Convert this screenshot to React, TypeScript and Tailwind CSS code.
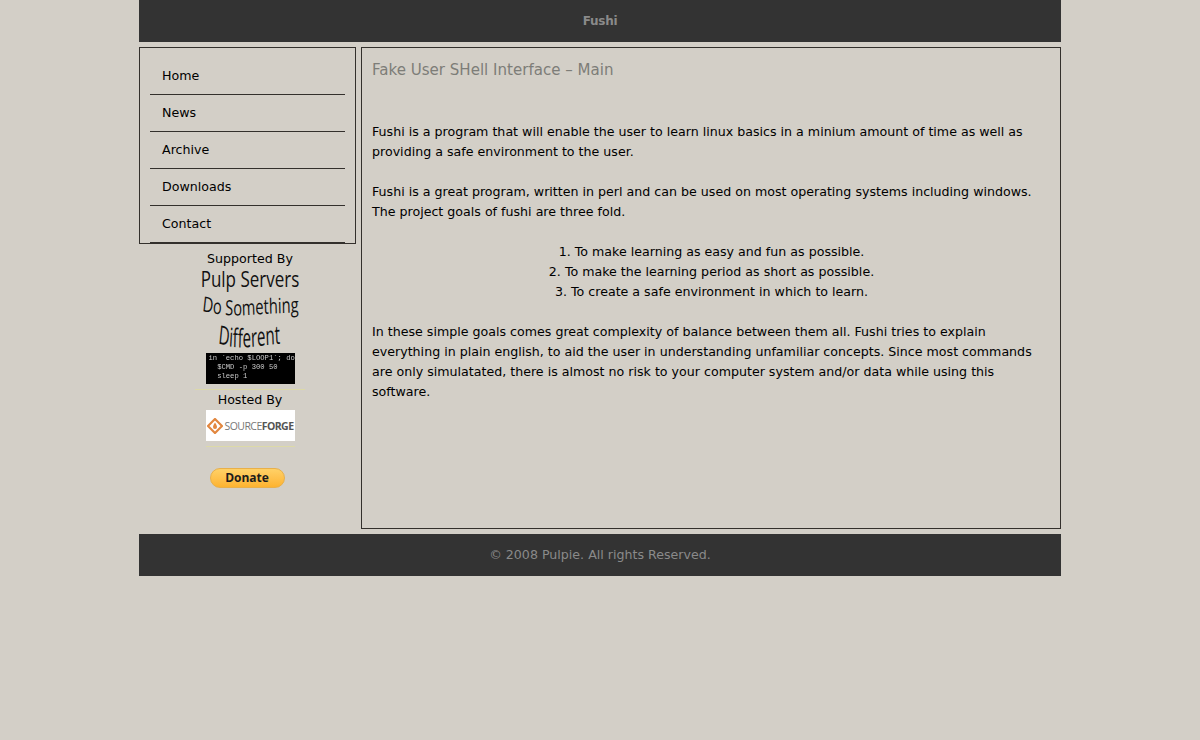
const NAV_ITEMS = ["Home", "News", "Archive", "Downloads", "Contact"];

function PulpServersLogo() {
  return (
    <svg width="110" height="84" viewBox="0 0 110 84" className="block overflow-visible">
      <defs>
        <path id="line-do" d="M 7 42 Q 40 48 75 46 T 160 43" />
        <path id="line-diff" d="M 23 74 Q 50 80 80 78 T 140 74" />
      </defs>
      <text x="55" y="18" textAnchor="middle" fontFamily="'Open Sans', sans-serif" fontSize="21" fill="#111" transform="translate(55 0) scale(0.81 1) translate(-55 0)">
        Pulp Servers
      </text>
      <text fontFamily="'Open Sans', sans-serif" fontSize="21" fill="#111" transform="translate(7 0) scale(0.7 1) translate(-7 0)">
        <textPath href="#line-do">Do Something</textPath>
      </text>
      <text fontFamily="'Open Sans', sans-serif" fontSize="26" fill="#111" transform="translate(23 0) scale(0.58 1) translate(-23 0)">
        <textPath href="#line-diff">Different</textPath>
      </text>
    </svg>
  );
}

function TerminalShot() {
  return (
    <div className="w-[89px] h-[31px] bg-black overflow-hidden font-['Liberation_Mono',monospace] text-[7.2px] leading-[9px] text-[#c9c9c9] whitespace-pre pt-[1px] pl-[3px] [filter:blur(0.3px)]">
      <div>{"in `echo $LOOP1`; do"}</div>
      <div>{"  $CMD -p 300 50"}</div>
      <div>{"  sleep 1"}</div>
    </div>
  );
}

function SourceForgeLogo() {
  return (
    <div className="w-[89px] h-[31px] bg-white flex items-center pl-[1px]">
      <svg width="16" height="16" viewBox="0 0 16 16" className="shrink-0">
        <path d="M8 1 L15 8 L8 15 L1 8 Z" fill="none" stroke="#e2873f" strokeWidth="2.2" />
        <path d="M8 4.5 C9.5 7 10 8 10 9 A2 2 0 0 1 6 9 C6 8 6.5 7 8 4.5 Z" fill="#e2873f" />
      </svg>
      <span className="ml-[2px] text-[10.5px] tracking-[-0.55px] font-['Open_Sans',sans-serif] text-[#777] whitespace-nowrap">
        SOURCE<span className="font-bold text-[#555]">FORGE</span>
      </span>
    </div>
  );
}

export default function App() {
  return (
    <div className="min-h-[740px] bg-[#d3cfc7] font-['DejaVu_Sans',sans-serif] text-[12.64px] leading-[20px] text-black">
      <div className="w-[922px] mx-auto flex flex-col gap-[5px]">
        <div className="h-[42px] bg-[#333333] flex items-center justify-center text-[#8a8a8a] font-bold text-[12px] tracking-[-0.3px]">
          Fushi
        </div>

        <div className="flex gap-[5px] items-start">
          <div className="w-[217px] shrink-0">
            <div className="h-[197px] border border-[#33302c] px-[10px] pt-[10px]">
              {NAV_ITEMS.map((item) => (
                <div key={item} className="h-[37px] border-b border-[#33302c] pl-[12px] pt-[8px]">
                  {item}
                </div>
              ))}
            </div>
            <div className="flex flex-col items-center pl-[5px] pt-[5px]">
              <div className="h-[20px]">Supported By</div>
              <PulpServersLogo />
              <TerminalShot />
              <div className="w-[110px] h-px bg-[#dcd9a8] mt-[5px]" />
              <div className="h-[20px]">Hosted By</div>
              <SourceForgeLogo />
              <div className="w-[89px] h-px bg-[#dcd9a8] mt-[5px]" />
            </div>
            <div className="flex justify-center mt-[21px] pr-px">
              <div className="w-[75px] h-[20px] rounded-full border border-[#e8b04a] bg-gradient-to-b from-[#ffd166] to-[#fdb32f] flex items-center justify-center font-['Open_Sans',sans-serif] font-bold text-[12px] text-[#1c1c1c]">
                Donate
              </div>
            </div>
          </div>

          <div className="flex-1 h-[482px] border border-[#33302c] px-[10px] pt-[11px]">
            <h1 className="text-[15.05px] leading-[22px] text-[#7d7d78] font-normal">Fake User SHell Interface – Main</h1>
            <p className="mt-[41px]">
              Fushi is a program that will enable the user to learn linux basics in a minium amount of time as well as providing a safe environment to the user.
            </p>
            <p className="mt-[20px]">
              Fushi is a great program, written in perl and can be used on most operating systems including windows. The project goals of fushi are three fold.
            </p>
            <div className="mt-[20px] text-center pl-[1px]">
              <div>1. To make learning as easy and fun as possible.</div>
              <div>2. To make the learning period as short as possible.</div>
              <div>3. To create a safe environment in which to learn.</div>
            </div>
            <p className="mt-[20px]">
              In these simple goals comes great complexity of balance between them all. Fushi tries to explain everything in plain english, to aid the user in understanding unfamiliar concepts. Since most commands are only simulatated, there is almost no risk to your computer system and/or data while using this software.
            </p>
          </div>
        </div>

        <div className="h-[42px] bg-[#333333] flex items-center justify-center text-[#8a8a8a]">
          © 2008 Pulpie. All rights Reserved.
        </div>
      </div>
    </div>
  );
}
